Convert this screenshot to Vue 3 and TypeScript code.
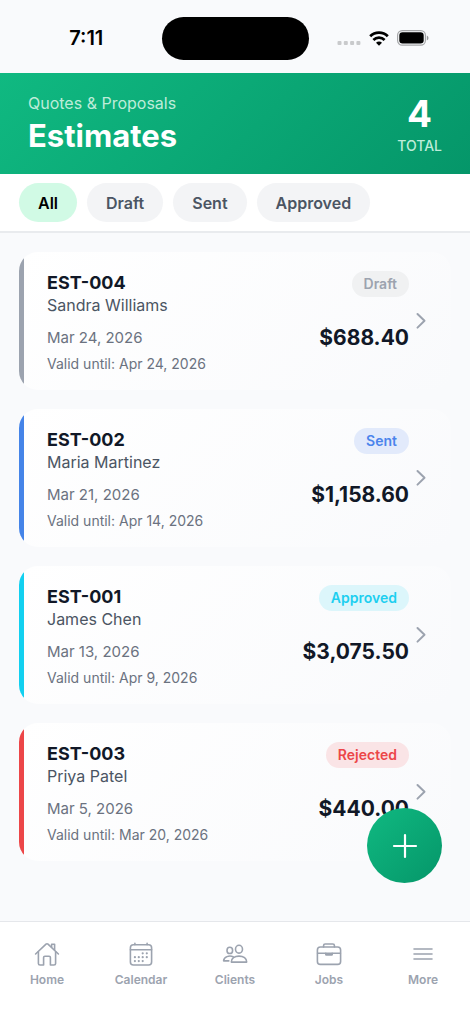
<script setup lang="ts">
import { computed, ref } from 'vue'

type Status = 'Draft' | 'Sent' | 'Approved' | 'Rejected'
type Filter = 'All' | 'Draft' | 'Sent' | 'Approved'

interface Estimate {
  id: string
  client: string
  date: string
  validUntil: string
  status: Status
  amount: string
}

const filters: Filter[] = ['All', 'Draft', 'Sent', 'Approved']
const active = ref<Filter>('All')

const estimates: Estimate[] = [
  { id: 'EST-004', client: 'Sandra Williams', date: 'Mar 24, 2026', validUntil: 'Apr 24, 2026', status: 'Draft', amount: '$688.40' },
  { id: 'EST-002', client: 'Maria Martinez', date: 'Mar 21, 2026', validUntil: 'Apr 14, 2026', status: 'Sent', amount: '$1,158.60' },
  { id: 'EST-001', client: 'James Chen', date: 'Mar 13, 2026', validUntil: 'Apr 9, 2026', status: 'Approved', amount: '$3,075.50' },
  { id: 'EST-003', client: 'Priya Patel', date: 'Mar 5, 2026', validUntil: 'Mar 20, 2026', status: 'Rejected', amount: '$440.00' },
]

const shown = computed(() =>
  active.value === 'All' ? estimates : estimates.filter((e) => e.status === active.value),
)

const tabs = ['Home', 'Calendar', 'Clients', 'Jobs', 'More']
</script>

<template>
  <div class="screen">
    <div class="status-bar">
      <div class="status-side"><span class="clock">7:11</span></div>
      <div class="island"></div>
      <div class="status-side indicators">
        <svg class="signal" width="24" height="6" viewBox="0 0 24 6" fill="#c9cacc">
          <rect x="0.5" y="1" width="4" height="4" rx="1" />
          <rect x="6.8" y="1" width="4" height="4" rx="1" />
          <rect x="13.1" y="1" width="4" height="4" rx="1" />
          <rect x="19.4" y="1" width="4" height="4" rx="1" />
        </svg>
        <svg width="20" height="15" viewBox="0 0 20 15" fill="none" stroke="#000" stroke-width="2.8">
          <path d="M1.2 5.2C6 .5 14 .5 18.8 5.2" />
          <path d="M4.4 8.9C7.5 5.9 12.5 5.9 15.6 8.9" />
          <path d="M7 11.7C8.7 10 11.3 10 13 11.7L10 14.8Z" fill="#000" stroke="none" />
        </svg>
        <svg width="32" height="16" viewBox="0 0 32 16">
          <rect x="0.6" y="0.6" width="27.8" height="14.6" rx="4.6" fill="none" stroke="#a5a6a8" stroke-width="1.2" />
          <rect x="2.3" y="2.3" width="24.4" height="11.2" rx="3.2" fill="#000" />
          <path d="M29.8 5.5C32 6.5 32 9.5 29.8 10.5Z" fill="#98999b" />
        </svg>
      </div>
    </div>

    <header class="hero">
      <div>
        <p class="eyebrow">Quotes &amp; Proposals</p>
        <h1>Estimates</h1>
      </div>
      <div class="total">
        <strong>4</strong>
        <span>TOTAL</span>
      </div>
    </header>

    <div class="filters">
      <button
        v-for="f in filters"
        :key="f"
        type="button"
        class="chip"
        :class="{ on: f === active }"
        :aria-pressed="f === active"
        @click="active = f"
      >{{ f }}</button>
    </div>

    <main class="list">
      <a v-for="e in shown" :key="e.id" href="#" class="card" :class="e.status.toLowerCase()">
        <span class="stripe"></span>
        <div class="info">
          <h2>{{ e.id }}</h2>
          <p class="client">{{ e.client }}</p>
          <p class="date">{{ e.date }}</p>
          <p class="valid">Valid until: {{ e.validUntil }}</p>
        </div>
        <div class="figures">
          <span class="badge">{{ e.status }}</span>
          <span class="amount">{{ e.amount }}</span>
        </div>
        <svg class="chevron" width="10" height="18" viewBox="0 0 10 18" fill="none" stroke="#9ca3af" stroke-width="2" stroke-linecap="round" stroke-linejoin="round">
          <path d="M1.5 2L8.5 8.8L1.5 15.6" />
        </svg>
      </a>
    </main>

    <button type="button" class="fab" aria-label="New estimate">
      <svg width="26" height="26" viewBox="0 0 26 26" stroke="#fff" stroke-width="2.2" stroke-linecap="round">
        <path d="M13 2V24M2 13H24" />
      </svg>
    </button>

    <nav class="tabs">
      <a v-for="t in tabs" :key="t" href="#">
        <svg width="26" height="26" viewBox="0 0 26 26" fill="none" stroke="#9ca3af" stroke-width="1.6" stroke-linecap="round" stroke-linejoin="round">
          <template v-if="t === 'Home'">
            <path d="M1.6 13L12 3.2Q13 2.3 14 3.2L24.4 13" />
            <path d="M4.4 10.7V22.4Q4.4 24 6 24H9.6V16.6Q9.6 15.3 10.9 15.3H15.1Q16.4 15.3 16.4 16.6V24H20Q21.6 24 21.6 22.4V10.7" />
            <path d="M17.6 6V3.2H20.6V9" />
          </template>
          <template v-else-if="t === 'Calendar'">
            <rect x="2.4" y="3.8" width="21.2" height="20.2" rx="3" />
            <path d="M2.4 8.8H23.6M6.9 2.4V3.6M19.1 2.4V3.6" />
            <path d="M14.7 12.3h.01M18.8 12.3h.01M6.9 16.2h.01M10.8 16.2h.01M14.7 16.2h.01M18.8 16.2h.01M6.9 20.1h.01M10.8 20.1h.01M14.7 20.1h.01" stroke-width="2.2" />
          </template>
          <template v-else-if="t === 'Clients'">
            <ellipse cx="17" cy="8.2" rx="3.5" ry="3.9" />
            <path d="M9.3 21.1C9.2 17.4 12.6 15.1 17 15.1S24.8 17.4 24.7 21.1Z" />
            <ellipse cx="7.8" cy="9.4" rx="2.8" ry="3.1" />
            <path d="M11.2 15.7C7.2 14.1 1.8 15.7 1.6 19.9H6.8" />
          </template>
          <template v-else-if="t === 'Jobs'">
            <rect x="1.4" y="6" width="23.2" height="17.4" rx="3" />
            <path d="M7.6 6V4.6Q7.6 3 9.2 3H16.8Q18.4 3 18.4 4.6V6M1.6 12.2H24.4" />
            <path d="M9.8 12.4V13.4Q9.8 13.9 10.3 13.9H15.7Q16.2 13.9 16.2 13.4V12.4" />
          </template>
          <template v-else>
            <path d="M4 8H22M4 13H22M4 18H22" />
          </template>
        </svg>
        <span>{{ t }}</span>
      </a>
    </nav>
  </div>
</template>

<style>
body {
  background: #f9fafc;
}
</style>

<style scoped>
.screen {
  display: flex;
  flex-direction: column;
  min-height: 100vh;
  background: #f9fafc;
  color: #111827;
  font-family: Inter, "Liberation Sans", sans-serif;
}

h1,
h2,
p {
  margin: 0;
}

a {
  color: inherit;
  text-decoration: none;
}

button {
  border: 0;
  font-family: inherit;
  cursor: pointer;
}

.status-bar {
  display: grid;
  grid-template-columns: 1fr auto 1fr;
  align-items: center;
  height: 73px;
  padding-top: 3px;
  box-sizing: border-box;
}

.status-side {
  display: flex;
  justify-content: center;
}

.clock {
  padding-left: 11px;
  color: #000;
  font-size: 20px;
  font-weight: 600;
}

.island {
  width: 147px;
  height: 43px;
  border-radius: 22px;
  background: #000;
}

.indicators {
  align-items: center;
  gap: 8px;
  padding-right: 13px;
}

.signal {
  margin-top: 10px;
}

.hero {
  display: flex;
  justify-content: space-between;
  align-items: center;
  padding: 18px 28px;
  background: linear-gradient(135deg, #10b981, #059669);
  color: #fff;
}

.eyebrow {
  color: #bdecd9;
  font-size: 16px;
  line-height: 24px;
}

h1 {
  font-size: 31px;
  font-weight: 700;
  line-height: 41px;
}

.total {
  display: flex;
  flex-direction: column;
  align-items: center;
}

.total strong {
  font-size: 37px;
  font-weight: 700;
  line-height: 45px;
}

.total span {
  color: #bdecd9;
  font-size: 14px;
  font-weight: 500;
  line-height: 20px;
}

.filters {
  display: flex;
  gap: 10px;
  padding: 9px 19px;
  border-bottom: 2px solid #e9ebee;
  background: #fff;
}

.chip {
  height: 39px;
  padding: 0 19px;
  border-radius: 20px;
  background: #f3f4f6;
  color: #4b5563;
  font-size: 16px;
  font-weight: 600;
}

.chip.on {
  background: #d1fae5;
  color: #000;
}

.list {
  flex: 1;
  display: flex;
  flex-direction: column;
  gap: 19px;
  padding: 19px 19px 160px;
}

.card {
  display: flex;
  align-items: center;
  padding-right: 25px;
  border-radius: 19px;
  overflow: hidden;
  background: linear-gradient(135deg, #fff, #f9fafc);
}

.stripe {
  align-self: stretch;
  width: 5px;
  background: #9ca3af;
}

.info {
  flex: 1;
  padding: 19px 0 16px 23px;
}

h2 {
  font-size: 18px;
  font-weight: 700;
  line-height: 23px;
}

.client {
  color: #4b5563;
  font-size: 16px;
  line-height: 22px;
}

.date {
  margin-top: 10px;
  color: #6b7280;
  font-size: 15px;
  line-height: 24px;
}

.valid {
  margin-top: 4px;
  color: #6b7280;
  font-size: 14px;
  line-height: 20px;
}

.figures {
  display: flex;
  flex-direction: column;
  align-self: flex-start;
  align-items: flex-end;
  gap: 26px;
  padding-top: 19px;
}

.badge {
  padding: 0 12px;
  border-radius: 13px;
  background: #f0f1f2;
  color: #9ca3af;
  font-size: 14px;
  font-weight: 600;
  line-height: 26px;
}

.amount {
  font-size: 21px;
  font-weight: 700;
  line-height: 30px;
}

.chevron {
  margin-left: 7px;
}

.sent .stripe {
  background: #4584e8;
}

.sent .badge {
  background: #e2eafb;
  color: #4b84ec;
}

.approved .stripe {
  background: #12d0f0;
}

.approved .badge {
  background: #dcf6fb;
  color: #1dcff0;
}

.rejected .stripe {
  background: #ec4648;
}

.rejected .badge {
  background: #fae4e6;
  color: #ec4648;
}

.fab {
  position: fixed;
  right: 28px;
  bottom: 141px;
  display: flex;
  align-items: center;
  justify-content: center;
  width: 75px;
  height: 75px;
  padding: 0;
  border-radius: 50%;
  background: linear-gradient(135deg, #10b981, #059669);
}

.tabs {
  position: fixed;
  right: 0;
  bottom: 0;
  left: 0;
  display: flex;
  height: 103px;
  padding-top: 19px;
  box-sizing: border-box;
  border-top: 1px solid #e5e7eb;
  background: #fff;
}

.tabs a {
  flex: 1;
  display: flex;
  flex-direction: column;
  align-items: center;
  gap: 5px;
  color: #9ca3af;
  font-size: 12px;
  font-weight: 600;
  line-height: 16px;
}
</style>
